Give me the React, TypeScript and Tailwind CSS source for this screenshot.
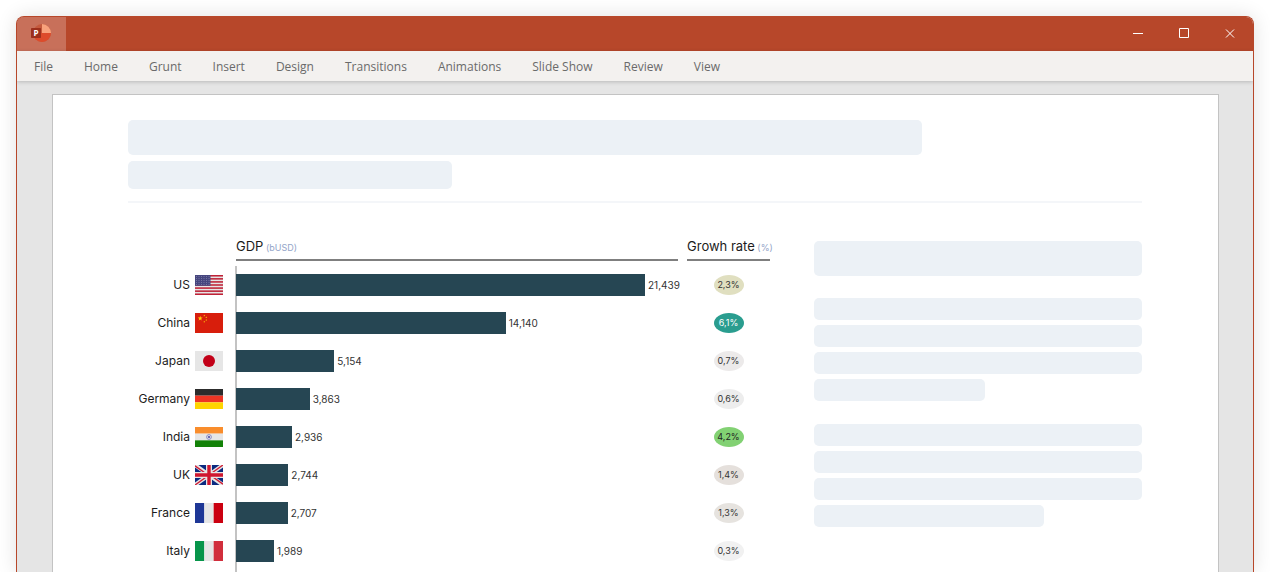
import React from 'react';

type Country = { name: string; flag: React.ReactNode; gdp: number; growth: string; badge: string };

const MENU = ['File', 'Home', 'Grunt', 'Insert', 'Design', 'Transitions', 'Animations', 'Slide Show', 'Review', 'View'];

const STAR = 'M0 -1L0.235 -0.324L0.951 -0.309L0.38 0.124L0.588 0.809L0 0.4L-0.588 0.809L-0.38 0.124L-0.951 -0.309L-0.235 -0.324Z';

function Stripes({ colors, vertical }: { colors: string[]; vertical?: boolean }) {
  return (
    <>
      {colors.map((c, i) =>
        vertical ? (
          <rect key={i} x={(i * 28) / 3} width={28 / 3} height="20" fill={c} />
        ) : (
          <rect key={i} y={(i * 20) / 3} width="28" height={20 / 3} fill={c} />
        ),
      )}
    </>
  );
}

const usFlag = (
  <>
    <rect width="28" height="20" fill="#e6e4e5" />
    {[0, 1, 2, 3, 4, 5, 6].map((i) => (
      <rect key={i} y={(i * 40) / 13} width="28" height={20 / 13} fill="#bf2237" />
    ))}
    <rect width="15.5" height="10.8" fill="#46467f" />
    {[1.4, 3.4, 5.4, 7.4, 9.4].map((y) =>
      [1.5, 4, 6.5, 9, 11.5, 14].map((x) => <circle key={`${x}-${y}`} cx={x} cy={y} r="0.45" fill="#b9b9d0" />),
    )}
  </>
);

const chinaFlag = (
  <>
    <rect width="28" height="20" fill="#d81e0c" />
    <path d={STAR} transform="translate(5.2 5.4) scale(2.6)" fill="#ffd20a" />
    <path d={STAR} transform="translate(9.3 2.6) scale(1)" fill="#ffd20a" />
    <path d={STAR} transform="translate(11.3 4.3) scale(1)" fill="#ffd20a" />
    <path d={STAR} transform="translate(11.3 7) scale(1)" fill="#ffd20a" />
    <path d={STAR} transform="translate(9.3 8.8) scale(1)" fill="#ffd20a" />
  </>
);

const ukFlag = (
  <>
    <rect width="28" height="20" fill="#0b2a80" />
    <path d="M0 0L28 20M28 0L0 20" stroke="#e6e6e6" strokeWidth="4" />
    <path d="M0 0.8L14 10.8M28 19.2L14 9.2M28 0L14 10M0 20L14 10" stroke="#cf1c34" strokeWidth="1.4" />
    <path d="M14 0V20M0 10H28" stroke="#e6e6e6" strokeWidth="6" />
    <path d="M14 0V20M0 10H28" stroke="#d0162f" strokeWidth="3.4" />
  </>
);

const COUNTRIES: Country[] = [
  { name: 'US', flag: usFlag, gdp: 21439, growth: '2,3%', badge: 'bg-[#e0dfc0] text-[#333]' },
  { name: 'China', flag: chinaFlag, gdp: 14140, growth: '6,1%', badge: 'bg-[#2a9d8f] text-white' },
  {
    name: 'Japan',
    flag: (
      <>
        <rect width="28" height="20" fill="#e6e6e6" />
        <circle cx="14" cy="10" r="6" fill="#c20017" />
      </>
    ),
    gdp: 5154,
    growth: '0,7%',
    badge: 'bg-[#eceaea] text-[#333]',
  },
  { name: 'Germany', flag: <Stripes colors={['#2c2c2c', '#ee3524', '#ffd500']} />, gdp: 3863, growth: '0,6%', badge: 'bg-[#ededed] text-[#333]' },
  {
    name: 'India',
    flag: (
      <>
        <Stripes colors={['#f98d2c', '#e6e6e6', '#138208']} />
        <circle cx="14" cy="10" r="2.4" fill="none" stroke="#6a6ab8" strokeWidth="0.7" />
        <circle cx="14" cy="10" r="1.1" fill="#4a4aa8" />
      </>
    ),
    gdp: 2936,
    growth: '4,2%',
    badge: 'bg-[#82d173] text-[#1f1f1f]',
  },
  { name: 'UK', flag: ukFlag, gdp: 2744, growth: '1,4%', badge: 'bg-[#e5e0dc] text-[#333]' },
  { name: 'France', flag: <Stripes vertical colors={['#1e3796', '#e6e6e6', '#cb0010']} />, gdp: 2707, growth: '1,3%', badge: 'bg-[#e6e3df] text-[#333]' },
  { name: 'Italy', flag: <Stripes vertical colors={['#07954a', '#e6e6e6', '#d12e3c']} />, gdp: 1989, growth: '0,3%', badge: 'bg-[#f1f1f1] text-[#333]' },
];

const SCALE_MAX = 23170;

function Logo() {
  return (
    <svg width="20" height="18" viewBox="0 0 20 18" aria-hidden="true">
      <circle cx="11" cy="9" r="9" fill="#c55a3d" />
      <path d="M11 0A9 9 0 0 1 20 9H11Z" fill="#f8a27c" />
      <path d="M2 9A9 9 0 0 0 20 9Z" fill="#dd4b2b" />
      <rect y="4" width="10" height="10" rx="0.8" fill="#9c2f1c" />
      <text x="5" y="11.8" textAnchor="middle" fontSize="8" fontWeight="700" fontFamily="Open Sans, sans-serif" fill="#fff">
        P
      </text>
    </svg>
  );
}

function WindowButton({ label, path }: { label: string; path: string }) {
  return (
    <button type="button" aria-label={label} className="flex h-full w-[46px] items-center justify-center pb-0.5">
      <svg width="10" height="10" viewBox="0 0 10 10" fill="none" stroke="#fff" aria-hidden="true">
        <path d={path} />
      </svg>
    </button>
  );
}

function Placeholder({ className }: { className: string }) {
  return <div className={`rounded-[5px] bg-[#ecf1f6] ${className}`} />;
}

function GdpTable() {
  return (
    <table className="w-[642px] table-fixed border-separate border-spacing-0 text-[#1c1c1c]">
      <colgroup>
        <col className="w-[107px]" />
        <col />
        <col className="w-[9px]" />
        <col className="w-[83px]" />
      </colgroup>
      <thead>
        <tr className="h-[24px] text-left align-top text-[13px] leading-[16px]">
          <td />
          <th scope="col" className="p-0 pl-px font-normal">
            <div className="h-[23px] border-b-2 border-[#7f7f7f]">
              GDP<span className="text-[9px] text-[#93a4c8]"> (bUSD)</span>
            </div>
          </th>
          <td />
          <th scope="col" className="p-0 font-normal whitespace-nowrap">
            <div className="h-[23px] border-b-2 border-[#7f7f7f]">
              Growh rate<span className="text-[9px] text-[#93a4c8]"> (%)</span>
            </div>
          </th>
        </tr>
        <tr className="h-[4px]">
          <td colSpan={4} className="p-0" />
        </tr>
      </thead>
      <tbody>
        {COUNTRIES.map((c) => (
          <tr key={c.name} className="h-[38px]">
            <th scope="row" className="p-0 font-normal">
              <div className="flex items-center justify-end gap-[5px] pr-3 text-[12px] leading-[16px]">
                {c.name}
                <svg width="28" height="20" viewBox="0 0 28 20" aria-hidden="true">
                  {c.flag}
                </svg>
              </div>
            </th>
            <td className="border-l-2 border-[#c3c3c3] p-0">
              <div className="-ml-px flex items-center gap-[3px] text-[10px] leading-[12px] text-[#333]">
                <div className="h-[22px] shrink-0 bg-[#264653]" style={{ width: `${(c.gdp / SCALE_MAX) * 100}%` }} />
                {c.gdp.toLocaleString('en-US')}
              </div>
            </td>
            <td />
            <td className="p-0">
              <span className={`mx-auto flex h-5 w-[30px] items-center justify-center rounded-[50%] text-[9px] leading-[12px] ${c.badge}`}>
                {c.growth}
              </span>
            </td>
          </tr>
        ))}
      </tbody>
      <tfoot>
        <tr className="h-[38px]">
          <td />
          <td className="border-l-2 border-[#c3c3c3] p-0" />
          <td colSpan={2} />
        </tr>
      </tfoot>
    </table>
  );
}

export default function App() {
  return (
    <div className="flex h-screen flex-col overflow-hidden bg-white px-4 pt-4 font-['Inter',sans-serif]">
      <div className="flex min-h-0 flex-1 flex-col overflow-hidden rounded-t-[8px] border border-b-0 border-[#b7472a] bg-[#e5e5e5] shadow-[0_0_20px_rgba(0,0,0,0.12)]">
        <header className="flex h-[34px] shrink-0 items-center bg-[#b7472a]">
          <div className="flex h-full w-[49px] items-center justify-center bg-[#c8705a] pr-px pb-0.5">
            <Logo />
          </div>
          <div className="ml-auto flex h-full">
            <WindowButton label="Minimize" path="M0 5.5H10" />
            <WindowButton label="Maximize" path="M0.5 0.5H9.5V9.5H0.5Z" />
            <WindowButton label="Close" path="M1 1.5L9 9.5M9 1.5L1 9.5" />
          </div>
        </header>
        <nav className="z-10 flex h-[30px] shrink-0 items-center gap-[31px] bg-[#f3f1ef] px-[17px] pt-0.5 font-['Open_Sans',sans-serif] text-[12px] text-[#6a6a6a] shadow-[0_1px_4px_rgba(0,0,0,0.2)]">
          {MENU.map((m) => (
            <a key={m} href="#" className="whitespace-nowrap">
              {m}
            </a>
          ))}
        </nav>
        <main className="flex min-h-0 flex-1 pt-[13px] pr-[34px] pl-[35px]">
          <article className="flex-1 border border-b-0 border-[#c3c3c3] bg-white pt-[25px] pr-[76px] pl-[75px]">
            <div className="flex flex-col gap-1.5 border-b-2 border-[#f4f6f9] pb-3">
              <Placeholder className="h-[35px] w-[78.3%]" />
              <Placeholder className="h-[28px] w-[32%]" />
            </div>
            <div className="flex gap-[44px] pt-[35px]">
              <GdpTable />
              <div className="flex flex-1 flex-col gap-[22px] pt-[3px]">
                <Placeholder className="h-[35px]" />
                <div className="flex flex-col gap-[5px] pb-px">
                  <Placeholder className="h-[22px]" />
                  <Placeholder className="h-[22px]" />
                  <Placeholder className="h-[22px]" />
                  <Placeholder className="h-[22px] w-[52%]" />
                </div>
                <div className="flex flex-col gap-[5px]">
                  <Placeholder className="h-[22px]" />
                  <Placeholder className="h-[22px]" />
                  <Placeholder className="h-[22px]" />
                  <Placeholder className="h-[22px] w-[70%]" />
                </div>
              </div>
            </div>
          </article>
        </main>
      </div>
    </div>
  );
}
